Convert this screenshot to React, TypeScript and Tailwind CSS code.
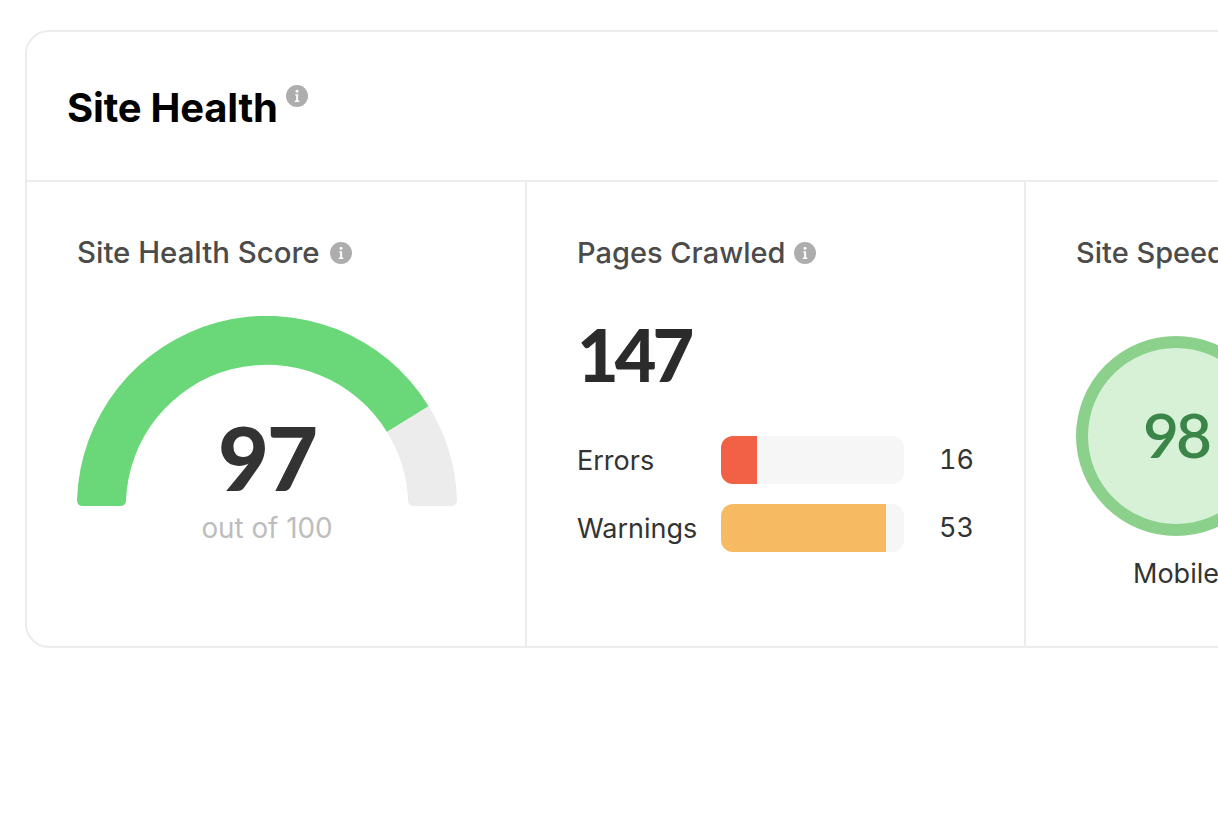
const Info = ({ className }: { className: string }) => (
  <svg viewBox="0 0 22 22" className={className}>
    <circle cx="11" cy="11" r="11" fill="#adadad" />
    <circle cx="11" cy="6.2" r="1.5" fill="#fff" />
    <path d="M9.2 9.2h2.9v6.3h1.2v1.4H8.8v-1.4h1.4v-4.9H9.2z" fill="#fff" />
  </svg>
);

function Gauge() {
  return (
    <div className="relative mt-[44px] h-[240px] w-[380px]">
      <svg viewBox="0 0 380 190" className="h-[190px] w-[380px]">
        <path d="M0,184 A190,190 0 0 1 351.65,90.15 L309.96,115.9 A141,141 0 0 0 49,184 Q49,190 43,190 L6,190 Q0,190 0,184 Z" fill="#6ad879" />
        <path d="M351.65,90.15 A190,190 0 0 1 380,184 Q380,190 374,190 L337,190 Q331,190 331,184 A141,141 0 0 0 309.96,115.9 Z" fill="#ececec" />
      </svg>
      <div className="absolute left-0 right-0 top-[88px] text-center [font-family:Lato] text-[88px] font-black leading-[106px] tracking-[-2px] text-[#333333]">97</div>
      <div className="absolute left-0 right-0 top-[195px] text-center text-[27.8px] leading-[34px] text-[#bdbdbd]">out of 100</div>
    </div>
  );
}

function Row({ label, value, fill }: { label: string; value: string; fill: string }) {
  return (
    <div className="flex h-[48px] items-center">
      <div className="w-[144px] pt-[2px] text-[27px] text-[#333333]">{label}</div>
      <div className="h-[48px] w-[183px] overflow-hidden rounded-[12px] bg-[#f6f6f6]">
        <div className={fill} />
      </div>
      <div className="flex-1 text-right text-[27px] tabular-nums text-[#333333]">{value}</div>
    </div>
  );
}

export default function App() {
  return (
    <div className="h-[820px] w-[1218px] overflow-hidden bg-white pl-[25px] pt-[30px] font-[family-name:Inter]">
      <div className="w-[1500px] rounded-[24px] border-2 border-[#ececec]">
        <div className="flex h-[150px] items-start border-b-2 border-[#ececec] pl-[40px] pt-[50px]">
          <h1 className="text-[40px] font-bold leading-[52px] tracking-[-0.2px] text-black">Site Health</h1>
          <Info className="ml-[8px] mt-[3px] h-[22px] w-[22px]" />
        </div>
        <div className="flex h-[464px]">
          <section className="w-[500px] border-r-2 border-[#ececec] pl-[50px] pt-[52px]">
            <div className="flex h-[38px] items-center text-[29.4px] font-medium text-[#4b4b4b]">
              Site Health Score
              <Info className="ml-[10px] h-[22px] w-[22px]" />
            </div>
            <Gauge />
          </section>
          <section className="w-[499px] border-r-2 border-[#ececec] px-[50px] pt-[52px]">
            <div className="flex h-[38px] items-center text-[29px] font-medium text-[#4b4b4b]">
              Pages Crawled
              <Info className="ml-[9px] h-[22px] w-[22px]" />
            </div>
            <div className="mt-[37px] [font-family:Lato] text-[72px] font-black leading-[90px] tracking-[-4px] text-[#2b2b2b]">147</div>
            <div className="mt-[37px] flex flex-col gap-[20px]">
              <Row label="Errors" value="16" fill="h-full w-[36px] bg-[#f26046]" />
              <Row label="Warnings" value="53" fill="h-full w-[165px] bg-[#f6ba63]" />
            </div>
          </section>
          <section className="flex-1 pl-[50px] pt-[52px]">
            <div className="flex h-[38px] items-center text-[29px] font-medium text-[#4b4b4b]">
              Site Speed
              <Info className="ml-[10px] h-[22px] w-[22px]" />
            </div>
            <div className="mt-[64px] w-[200px]">
              <div className="flex h-[200px] w-[200px] items-center justify-center rounded-full border-[12px] border-[#8bd18b] bg-[#d7f1d7] pb-[4px] [font-family:Lato] text-[62px] font-semibold tracking-[-3px] text-[#3a8547]">98</div>
              <div className="mt-[18px] text-center text-[27px] text-[#333333]">Mobile</div>
            </div>
          </section>
        </div>
      </div>
    </div>
  );
}
